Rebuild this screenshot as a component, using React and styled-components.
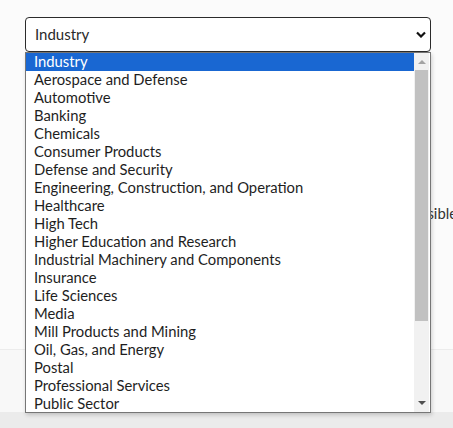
import React from "react";
import styled, { createGlobalStyle } from "styled-components";

const industries = [
    "Industry",
    "Aerospace and Defense",
    "Automotive",
    "Banking",
    "Chemicals",
    "Consumer Products",
    "Defense and Security",
    "Engineering, Construction, and Operation",
    "Healthcare",
    "High Tech",
    "Higher Education and Research",
    "Industrial Machinery and Components",
    "Insurance",
    "Life Sciences",
    "Media",
    "Mill Products and Mining",
    "Oil, Gas, and Energy",
    "Postal",
    "Professional Services",
    "Public Sector",
];

const GlobalStyle = createGlobalStyle`
    html, body {
        margin: 0;
        padding: 0;
        background: #fafafa;
        overflow: hidden;
    }
    body {
        font-family: Lato, "Open Sans", sans-serif;
        color: #222;
    }
`;

const App = () => {
    return (
        <>
            <GlobalStyle />
            <Page>
                <FormArea>
                    <SelectWrap>
                        <SelectBox>
                            <span>Industry</span>
                            <Chevron viewBox="0 0 10 6">
                                <path d="M1 1l4 4 4-4" />
                            </Chevron>
                        </SelectBox>
                        <OptionList>
                            <Options>
                                {industries.map((name, i) => (
                                    <Option key={name} $selected={i === 0}>
                                        {name}
                                    </Option>
                                ))}
                            </Options>
                            <ScrollTrack>
                                <Arrow>
                                    <svg viewBox="0 0 8 5" width="8" height="5">
                                        <path d="M0 5L4 1l4 4z" fill="#a3a3a3" />
                                    </svg>
                                </Arrow>
                                <Rail>
                                    <Thumb />
                                </Rail>
                                <Arrow>
                                    <svg viewBox="0 0 8 5" width="8" height="5">
                                        <path d="M0 0l4 4 4-4z" fill="#505050" />
                                    </svg>
                                </Arrow>
                            </ScrollTrack>
                        </OptionList>
                    </SelectWrap>
                    <Note>
                        We will reply to your request as soon as possible
                    </Note>
                </FormArea>
                <Lower />
                <Footer />
            </Page>
        </>
    );
};

export default App;

const Page = styled.div`
    width: 100%;
    height: 428px;
    display: flex;
    flex-direction: column;
`;
const FormArea = styled.div`
    height: 350px;
    padding: 17px 22px 0 25px;
    box-sizing: border-box;
    border-bottom: 1px solid #ececec;
    background: #fbfbfb;
`;
const SelectWrap = styled.div`
    position: relative;
    width: 406px;
    z-index: 2;
`;
const SelectBox = styled.div`
    height: 35px;
    box-sizing: border-box;
    border: 1px solid #2b2b2b;
    border-radius: 4px;
    background: #fff;
    display: flex;
    align-items: center;
    justify-content: space-between;
    padding: 0 4px 1px 9px;
    span {
        font-size: 15px;
        color: #2a2a2a;
    }
`;
const Chevron = styled.svg`
    width: 10px;
    height: 7px;
    fill: none;
    stroke: #111;
    stroke-width: 2.2;
`;
const OptionList = styled.div`
    position: absolute;
    top: 35px;
    left: 0;
    width: 406px;
    height: 361px;
    box-sizing: border-box;
    border: 1px solid #767676;
    background: #fff;
    box-shadow: 1px 2px 4px rgba(0, 0, 0, 0.18);
    display: flex;
    overflow: hidden;
`;
const Options = styled.div`
    flex: 1;
`;
const Option = styled.div`
    height: 18px;
    box-sizing: border-box;
    line-height: 17px;
    padding: 0 0 1px 8px;
    font-size: 14.8px;
    white-space: nowrap;
    color: ${(p) => (p.$selected ? "#fff" : "#1e1e1e")};
    background: ${(p) => (p.$selected ? "#1967d2" : "transparent")};
`;
const ScrollTrack = styled.div`
    width: 15px;
    background: #f1f1f1;
    display: flex;
    flex-direction: column;
    align-items: center;
    margin-right: 1px;
`;
const Arrow = styled.div`
    height: 17px;
    width: 100%;
    display: flex;
    align-items: center;
    justify-content: center;
`;
const Rail = styled.div`
    flex: 1;
    width: 100%;
    display: flex;
    justify-content: center;
`;
const Thumb = styled.div`
    width: 13px;
    height: 251px;
    background: #c1c1c1;
`;
const Note = styled.p`
    margin: 152px -26px 0 0;
    text-align: right;
    white-space: nowrap;
    font-size: 14.8px;
    color: #333;
`;
const Lower = styled.div`
    height: 62px;
    background: #f8f8f8;
`;
const Footer = styled.div`
    flex: 1;
    background: #ebebeb;
`;
